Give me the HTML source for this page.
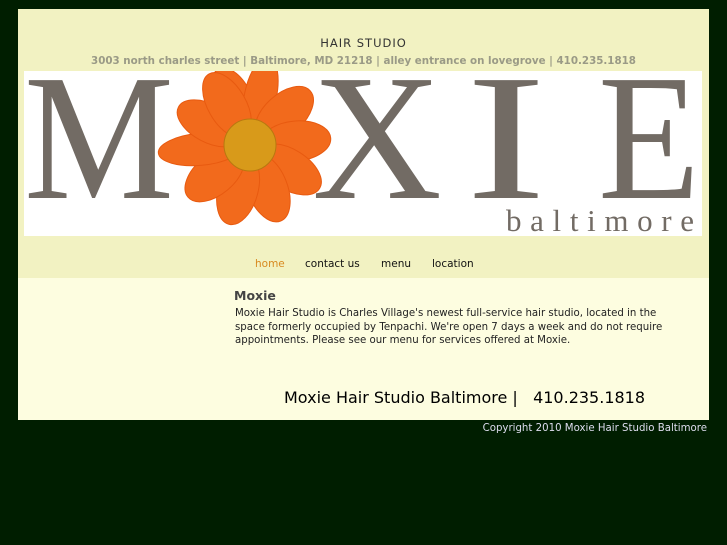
<!DOCTYPE html>
<html><head><meta charset="utf-8"><style>
body{margin:0;background:#001e00;width:727px;height:545px;overflow:hidden;font-family:"DejaVu Sans","Liberation Sans",sans-serif}
#wrap{position:absolute;left:18px;top:9px;width:691px;height:411px;background:#fdfde0}
#top{position:absolute;left:0;top:0;width:691px;height:269px;background:#f2f2c2}
.hs{position:absolute;left:0;width:691px;text-align:center;top:27px;font-size:11.5px;letter-spacing:1px;color:#333}
.addr{position:absolute;left:0;width:691px;text-align:center;top:46px;font-size:10.3px;font-weight:bold;color:#9a9a86}
#ban{position:absolute;left:6px;top:62px;width:678px;height:165px;background:#fff}
.nav{position:absolute;top:249px;font-size:10.5px;color:#111}
h3{position:absolute;left:216px;top:279px;margin:0;font-size:12.5px;color:#444;font-weight:bold}
.p{position:absolute;left:217px;top:298px;width:450px;font-size:10.2px;line-height:13.7px;color:#222}
.big{position:absolute;left:266px;top:379px;font-size:16px;color:#000}
.copy{position:absolute;right:20px;top:423px;font-size:10.2px;color:#dde}
</style></head><body>
<div id="wrap">
<div id="top"></div>
<div class="hs">HAIR STUDIO</div>
<div class="addr">3003 north charles street | Baltimore, MD 21218 | alley entrance on lovegrove | 410.235.1818</div>
<div id="ban"><svg width="678" height="165" viewBox="24 71 678 165">
<g font-family="Liberation Serif,serif" fill="#726b64" font-size="180">
<text x="24" y="198" textLength="150" lengthAdjust="spacingAndGlyphs">M</text>
<text x="312" y="198" textLength="130" lengthAdjust="spacingAndGlyphs">X</text>
<text x="466" y="198" textLength="80" lengthAdjust="spacingAndGlyphs">I</text>
<text x="598" y="198" textLength="102" lengthAdjust="spacingAndGlyphs">E</text>
<text x="506" y="231" font-size="31" textLength="188" lengthAdjust="spacing">baltimore</text>
</g>
<g transform="translate(250,145)" fill="#f26a1c" stroke="#e85a10" stroke-width="1">
<ellipse cx="0" cy="-46" rx="20" ry="36" transform="rotate(-22)"/>
<ellipse cx="0" cy="-50" rx="16" ry="40" transform="rotate(12)"/>
<ellipse cx="0" cy="-46" rx="20" ry="35" transform="rotate(48)"/>
<ellipse cx="0" cy="-46" rx="20" ry="35" transform="rotate(85)"/>
<ellipse cx="0" cy="-46" rx="20" ry="36" transform="rotate(122)"/>
<ellipse cx="0" cy="-46" rx="20" ry="36" transform="rotate(158)"/>
<ellipse cx="0" cy="-46" rx="20" ry="36" transform="rotate(195)"/>
<ellipse cx="0" cy="-46" rx="20" ry="35" transform="rotate(230)"/>
<ellipse cx="0" cy="-50" rx="16" ry="42" transform="rotate(265)"/>
<ellipse cx="0" cy="-46" rx="19" ry="35" transform="rotate(298)"/>
<ellipse cx="0" cy="-46" rx="19" ry="36" transform="rotate(330)"/>
<circle r="26" fill="#d89a1a" stroke="#b87810"/>
</g>
</svg></div>
<div class="nav" style="left:237px;color:#d88a20">home</div>
<div class="nav" style="left:287px">contact us</div>
<div class="nav" style="left:363px">menu</div>
<div class="nav" style="left:414px">location</div>
<h3>Moxie</h3>
<div class="p">Moxie Hair Studio is Charles Village's newest full-service hair studio, located in the space formerly occupied by Tenpachi. We're open 7 days a week and do not require appointments. Please see our menu for services offered at Moxie.</div>
<div class="big">Moxie Hair Studio Baltimore |&nbsp;&nbsp; 410.235.1818</div>
</div>
<div class="copy">Copyright 2010 Moxie Hair Studio Baltimore</div>
</body></html>
